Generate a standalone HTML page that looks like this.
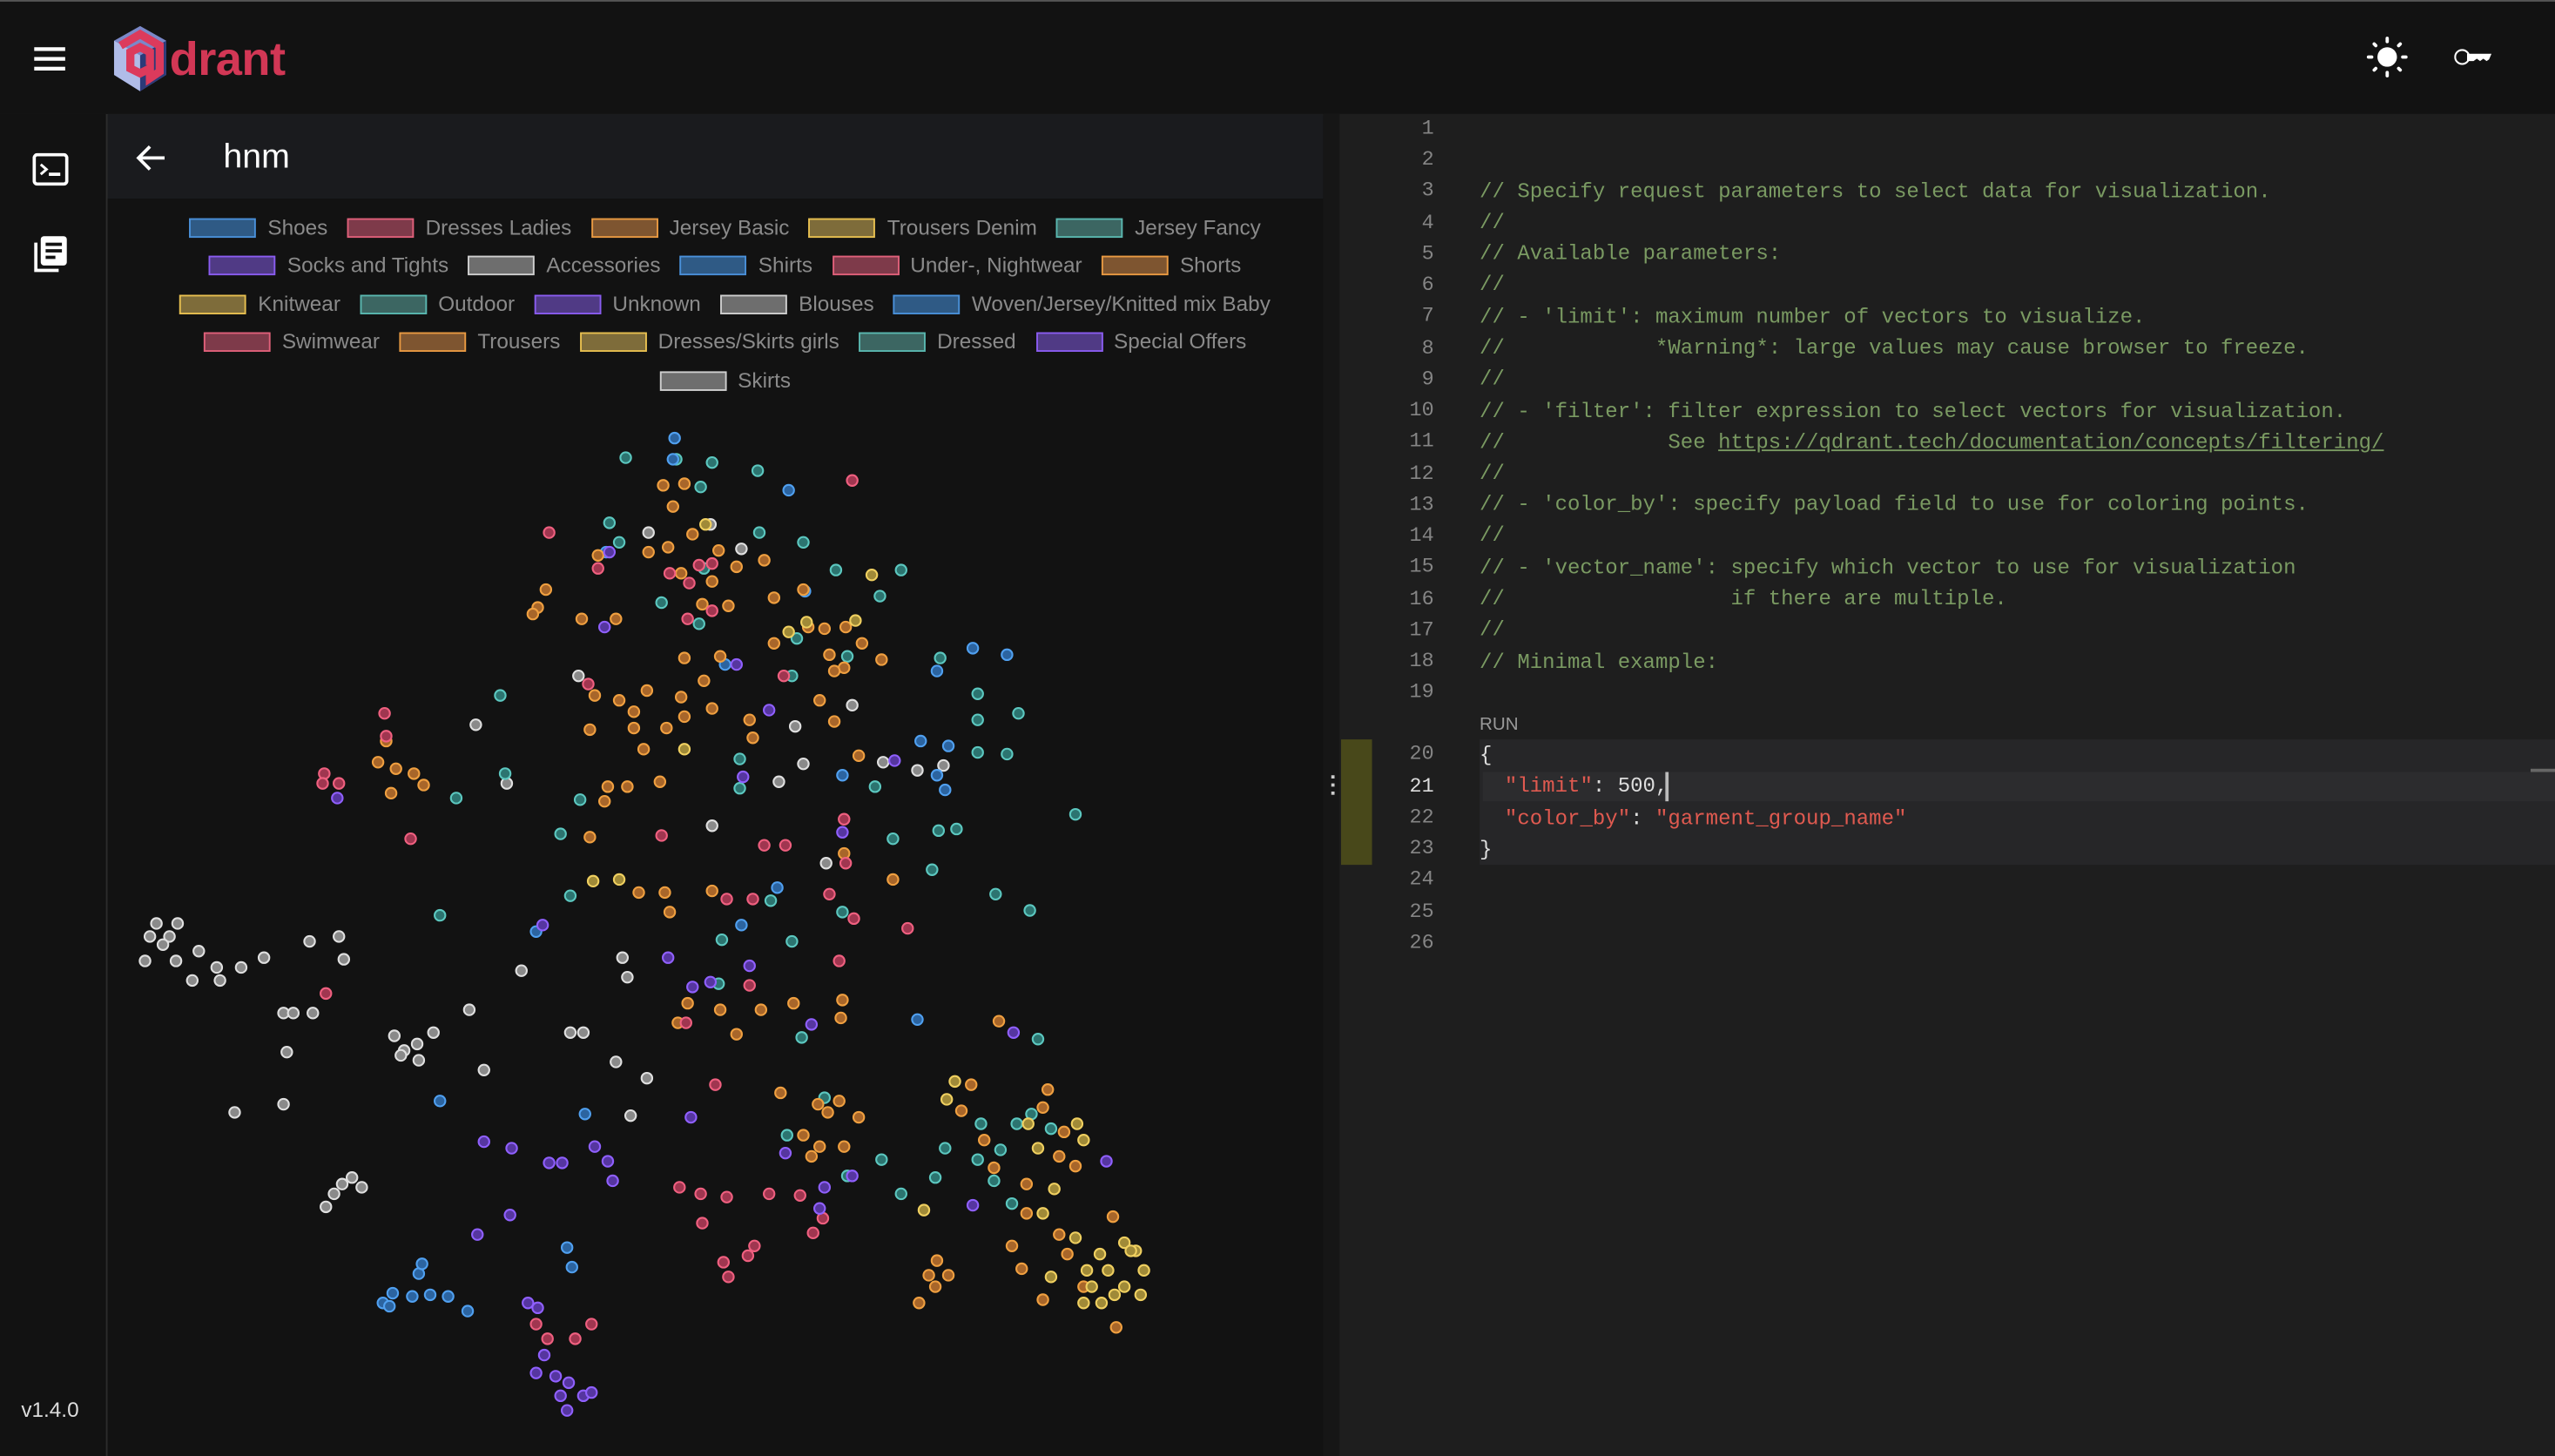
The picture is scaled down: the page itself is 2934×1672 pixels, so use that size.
<!DOCTYPE html>
<html><head><meta charset="utf-8"><style>
html,body{margin:0;padding:0;background:#121212;overflow:hidden;width:2934px;height:1672px}
#w{position:absolute;left:0;top:0;width:1568px;height:894px;transform:scale(1.8712,1.8703);transform-origin:0 0;background:#121212;font-family:"Liberation Sans",sans-serif;overflow:hidden}
.abs{position:absolute}
.top{left:0;top:0;width:1568px;height:69px;background:#121212;border-top:1px solid #555;border-bottom:1px solid #2c2c2c}
.side{left:0;top:70px;width:65px;height:824px;border-right:1px solid #2c2c2c;background:#121212}
.hdr{left:66px;top:70px;width:746px;height:52px;background:#1a1b1e}
.lp{left:66px;top:122px;width:746px;height:772px;background:#121212}
.ed{left:812px;top:70px;width:756px;height:824px;background:#1e1e1e}
.leg{left:66px;width:746px;text-align:center;font-size:13px;color:#8a8a8a;white-space:nowrap;line-height:16px}
.leg span.s{display:inline-block;width:39px;height:10px;border:1.5px solid;vertical-align:-2px;margin:0 7px 0 12px}
.ln{position:absolute;left:840px;width:40px;text-align:right;font-family:"Liberation Mono",monospace;font-size:12.5px;color:#858585;line-height:16px}
.cd{position:absolute;left:908px;font-family:"Liberation Mono",monospace;font-size:12.85px;color:#7a9a62;white-space:pre;line-height:16px}
circle{stroke-width:1.1}
.o circle{fill:#a8662a;stroke:#f0a040}
.t circle{fill:#2c7470;stroke:#5cc8c0}
.r circle{fill:#a03650;stroke:#f06080}
.b circle{fill:#2c64a0;stroke:#50a0f0}
.p circle{fill:#5636a0;stroke:#9060ff}
.g circle{fill:#8a8a8a;stroke:#e0e0e0}
.y circle{fill:#a08a38;stroke:#f0d060}
</style></head><body><div id="w">
<div class="abs top"></div>
<svg class="abs" style="left:20px;top:27px" width="22" height="18"><rect x="1" y="2" width="19" height="2.3" fill="#fff"/><rect x="1" y="8" width="19" height="2.3" fill="#fff"/><rect x="1" y="14" width="19" height="2.3" fill="#fff"/></svg>
<svg class="abs" style="left:68px;top:16px" width="36" height="42" viewBox="0 0 36 42">
<polygon points="18,0 34,9 34,30 18,40 2,30 2,9" fill="#7a88c8"/>
<polygon points="2,9 18,18 18,40 2,30" fill="#b0bce8"/>
<polygon points="18,18 34,9 34,30 18,40" fill="#2c3a78"/>
<path d="M6,12 L18,5 L30,12 L30,28 L24,32 L24,26 L18,29 L12,26 L12,16 L18,13 L24,16 L24,24" fill="none" stroke="#dc3a5c" stroke-width="5"/>
</svg>
<div class="abs" style="left:104px;top:21px;font-size:29px;font-weight:bold;color:#d23755;letter-spacing:-0.3px">drant</div>
<svg class="abs" style="left:1452px;top:22px" width="26" height="26" viewBox="0 0 26 26" fill="#fff"><circle cx="13" cy="13" r="6"/><g stroke="#fff" stroke-width="2" stroke-linecap="round"><line x1="13" y1="1.5" x2="13" y2="3.5"/><line x1="13" y1="22.5" x2="13" y2="24.5"/><line x1="1.5" y1="13" x2="3.5" y2="13"/><line x1="22.5" y1="13" x2="24.5" y2="13"/><line x1="5" y1="5" x2="6" y2="6"/><line x1="20" y1="20" x2="21" y2="21"/><line x1="5" y1="21" x2="6" y2="20"/><line x1="20" y1="6" x2="21" y2="5"/></g></svg>
<svg class="abs" style="left:1505px;top:27px" width="26" height="16" viewBox="0 0 26 16"><circle cx="6" cy="8" r="4.3" fill="none" stroke="#fff" stroke-width="3.4"/><path d="M9,6 L24,6 L22.5,9.5 L21,10.5 L19,9 L17,10.5 L15,9 L13,10.5 L9,10.5Z" fill="#fff"/></svg>
<div class="abs side"></div>
<svg class="abs" style="left:20px;top:94px" width="22" height="20" viewBox="0 0 22 20"><rect x="1" y="1" width="20" height="18" rx="2" fill="none" stroke="#fff" stroke-width="2"/><path d="M5,7 L8.5,10 L5,13" fill="none" stroke="#fff" stroke-width="1.6"/><rect x="10" y="12" width="7" height="2" fill="#fff"/></svg>
<svg class="abs" style="left:20px;top:144px" width="22" height="24" viewBox="0 0 22 24"><path d="M2,5 L2,22 L16,22" fill="none" stroke="#fff" stroke-width="2"/><rect x="5" y="1" width="16" height="18" rx="2" fill="#fff"/><rect x="8" y="5" width="10" height="2" fill="#121212"/><rect x="8" y="9" width="10" height="2" fill="#121212"/><rect x="8" y="13" width="6" height="2" fill="#121212"/></svg>
<div class="abs" style="left:13px;top:858px;font-size:13px;color:#ddd">v1.4.0</div>
<div class="abs hdr"></div>
<svg class="abs" style="left:83px;top:87px" width="20" height="20" viewBox="0 0 20 20"><path d="M18,10 L3,10 M9,3 L2,10 L9,17" fill="none" stroke="#fff" stroke-width="2"/></svg>
<div class="abs" style="left:137px;top:85px;font-size:21px;color:#fff">hnm</div>
<div class="abs lp"></div>
<div class="abs leg" style="top:132px"><span class="s" style="background:#2f5a85;border-color:#4a90d9"></span>Shoes<span class="s" style="background:#7e3a4a;border-color:#e0607a"></span>Dresses Ladies<span class="s" style="background:#7e5530;border-color:#e99a42"></span>Jersey Basic<span class="s" style="background:#7e6c3a;border-color:#e8c050"></span>Trousers Denim<span class="s" style="background:#3c6662;border-color:#5ab8b0"></span>Jersey Fancy</div>
<div class="abs leg" style="top:155px"><span class="s" style="background:#503a85;border-color:#8a5cf0"></span>Socks and Tights<span class="s" style="background:#6e6e6e;border-color:#cfcfcf"></span>Accessories<span class="s" style="background:#2f5a85;border-color:#4a90d9"></span>Shirts<span class="s" style="background:#7e3a4a;border-color:#e0607a"></span>Under-, Nightwear<span class="s" style="background:#7e5530;border-color:#e99a42"></span>Shorts</div>
<div class="abs leg" style="top:179px"><span class="s" style="background:#7e6c3a;border-color:#e8c050"></span>Knitwear<span class="s" style="background:#3c6662;border-color:#5ab8b0"></span>Outdoor<span class="s" style="background:#503a85;border-color:#8a5cf0"></span>Unknown<span class="s" style="background:#6e6e6e;border-color:#cfcfcf"></span>Blouses<span class="s" style="background:#2f5a85;border-color:#4a90d9"></span>Woven/Jersey/Knitted mix Baby</div>
<div class="abs leg" style="top:202px"><span class="s" style="background:#7e3a4a;border-color:#e0607a"></span>Swimwear<span class="s" style="background:#7e5530;border-color:#e99a42"></span>Trousers<span class="s" style="background:#7e6c3a;border-color:#e8c050"></span>Dresses/Skirts girls<span class="s" style="background:#3c6662;border-color:#5ab8b0"></span>Dressed<span class="s" style="background:#503a85;border-color:#8a5cf0"></span>Special Offers</div>
<div class="abs leg" style="top:226px"><span class="s" style="background:#6e6e6e;border-color:#cfcfcf"></span>Skirts</div>
<svg class="abs" style="left:0;top:0" width="812" height="894">
<g class="g"><circle cx="96" cy="567" r="3.3"/><circle cx="92" cy="575" r="3.3"/><circle cx="104" cy="575" r="3.3"/><circle cx="109" cy="567" r="3.3"/><circle cx="100" cy="580" r="3.3"/><circle cx="89" cy="590" r="3.3"/><circle cx="108" cy="590" r="3.3"/><circle cx="122" cy="584" r="3.3"/><circle cx="118" cy="602" r="3.3"/><circle cx="133" cy="594" r="3.3"/><circle cx="135" cy="602" r="3.3"/><circle cx="148" cy="594" r="3.3"/><circle cx="162" cy="588" r="3.3"/><circle cx="190" cy="578" r="3.3"/><circle cx="208" cy="575" r="3.3"/><circle cx="211" cy="589" r="3.3"/><circle cx="174" cy="622" r="3.3"/><circle cx="180" cy="622" r="3.3"/><circle cx="192" cy="622" r="3.3"/><circle cx="176" cy="646" r="3.3"/><circle cx="144" cy="683" r="3.3"/><circle cx="174" cy="678" r="3.3"/><circle cx="242" cy="636" r="3.3"/><circle cx="248" cy="645" r="3.3"/><circle cx="256" cy="641" r="3.3"/><circle cx="266" cy="634" r="3.3"/><circle cx="257" cy="651" r="3.3"/><circle cx="246" cy="648" r="3.3"/><circle cx="288" cy="620" r="3.3"/><circle cx="297" cy="657" r="3.3"/><circle cx="320" cy="596" r="3.3"/><circle cx="350" cy="634" r="3.3"/><circle cx="358" cy="634" r="3.3"/><circle cx="382" cy="588" r="3.3"/><circle cx="385" cy="600" r="3.3"/><circle cx="378" cy="652" r="3.3"/><circle cx="397" cy="662" r="3.3"/><circle cx="387" cy="685" r="3.3"/><circle cx="205" cy="733" r="3.3"/><circle cx="210" cy="727" r="3.3"/><circle cx="216" cy="723" r="3.3"/><circle cx="222" cy="729" r="3.3"/><circle cx="200" cy="741" r="3.3"/><circle cx="292" cy="445" r="3.3"/><circle cx="311" cy="481" r="3.3"/><circle cx="355" cy="415" r="3.3"/><circle cx="437" cy="507" r="3.3"/><circle cx="493" cy="469" r="3.3"/><circle cx="507" cy="530" r="3.3"/><circle cx="563" cy="473" r="3.3"/><circle cx="579" cy="470" r="3.3"/><circle cx="523" cy="433" r="3.3"/><circle cx="542" cy="468" r="3.3"/><circle cx="455" cy="337" r="3.3"/><circle cx="436" cy="322" r="3.3"/><circle cx="478" cy="480" r="3.3"/><circle cx="488" cy="446" r="3.3"/><circle cx="398" cy="327" r="3.3"/></g>
<g class="t"><circle cx="384" cy="281" r="3.3"/><circle cx="415" cy="282" r="3.3"/><circle cx="437" cy="284" r="3.3"/><circle cx="430" cy="299" r="3.3"/><circle cx="465" cy="289" r="3.3"/><circle cx="374" cy="321" r="3.3"/><circle cx="380" cy="333" r="3.3"/><circle cx="307" cy="427" r="3.3"/><circle cx="280" cy="490" r="3.3"/><circle cx="310" cy="475" r="3.3"/><circle cx="344" cy="512" r="3.3"/><circle cx="356" cy="491" r="3.3"/><circle cx="270" cy="562" r="3.3"/><circle cx="350" cy="550" r="3.3"/><circle cx="443" cy="577" r="3.3"/><circle cx="441" cy="604" r="3.3"/><circle cx="486" cy="578" r="3.3"/><circle cx="492" cy="637" r="3.3"/><circle cx="506" cy="674" r="3.3"/><circle cx="483" cy="697" r="3.3"/><circle cx="520" cy="722" r="3.3"/><circle cx="553" cy="733" r="3.3"/><circle cx="574" cy="723" r="3.3"/><circle cx="600" cy="712" r="3.3"/><circle cx="610" cy="725" r="3.3"/><circle cx="580" cy="705" r="3.3"/><circle cx="602" cy="690" r="3.3"/><circle cx="614" cy="706" r="3.3"/><circle cx="624" cy="690" r="3.3"/><circle cx="633" cy="684" r="3.3"/><circle cx="621" cy="739" r="3.3"/><circle cx="645" cy="693" r="3.3"/><circle cx="466" cy="327" r="3.3"/><circle cx="493" cy="333" r="3.3"/><circle cx="513" cy="350" r="3.3"/><circle cx="553" cy="350" r="3.3"/><circle cx="540" cy="366" r="3.3"/><circle cx="486" cy="415" r="3.3"/><circle cx="489" cy="392" r="3.3"/><circle cx="520" cy="403" r="3.3"/><circle cx="577" cy="404" r="3.3"/><circle cx="600" cy="426" r="3.3"/><circle cx="625" cy="438" r="3.3"/><circle cx="618" cy="463" r="3.3"/><circle cx="600" cy="462" r="3.3"/><circle cx="587" cy="509" r="3.3"/><circle cx="576" cy="510" r="3.3"/><circle cx="548" cy="515" r="3.3"/><circle cx="572" cy="534" r="3.3"/><circle cx="611" cy="549" r="3.3"/><circle cx="632" cy="559" r="3.3"/><circle cx="660" cy="500" r="3.3"/><circle cx="454" cy="484" r="3.3"/><circle cx="454" cy="466" r="3.3"/><circle cx="537" cy="483" r="3.3"/><circle cx="473" cy="553" r="3.3"/><circle cx="600" cy="442" r="3.3"/><circle cx="429" cy="383" r="3.3"/><circle cx="406" cy="370" r="3.3"/><circle cx="637" cy="638" r="3.3"/><circle cx="541" cy="712" r="3.3"/><circle cx="432" cy="349" r="3.3"/><circle cx="517" cy="560" r="3.3"/></g>
<g class="b"><circle cx="414" cy="269" r="3.3"/><circle cx="413" cy="282" r="3.3"/><circle cx="484" cy="301" r="3.3"/><circle cx="494" cy="363" r="3.3"/><circle cx="575" cy="412" r="3.3"/><circle cx="597" cy="398" r="3.3"/><circle cx="618" cy="402" r="3.3"/><circle cx="580" cy="485" r="3.3"/><circle cx="575" cy="476" r="3.3"/><circle cx="565" cy="455" r="3.3"/><circle cx="582" cy="458" r="3.3"/><circle cx="517" cy="476" r="3.3"/><circle cx="477" cy="545" r="3.3"/><circle cx="563" cy="626" r="3.3"/><circle cx="359" cy="684" r="3.3"/><circle cx="270" cy="676" r="3.3"/><circle cx="235" cy="800" r="3.3"/><circle cx="241" cy="794" r="3.3"/><circle cx="257" cy="782" r="3.3"/><circle cx="253" cy="796" r="3.3"/><circle cx="264" cy="795" r="3.3"/><circle cx="275" cy="796" r="3.3"/><circle cx="287" cy="805" r="3.3"/><circle cx="348" cy="766" r="3.3"/><circle cx="351" cy="778" r="3.3"/><circle cx="329" cy="572" r="3.3"/><circle cx="455" cy="568" r="3.3"/><circle cx="445" cy="408" r="3.3"/><circle cx="372" cy="339" r="3.3"/><circle cx="259" cy="776" r="3.3"/><circle cx="239" cy="802" r="3.3"/></g>
<g class="o"><circle cx="407" cy="298" r="3.3"/><circle cx="420" cy="297" r="3.3"/><circle cx="413" cy="311" r="3.3"/><circle cx="398" cy="339" r="3.3"/><circle cx="410" cy="336" r="3.3"/><circle cx="425" cy="328" r="3.3"/><circle cx="441" cy="338" r="3.3"/><circle cx="452" cy="348" r="3.3"/><circle cx="367" cy="341" r="3.3"/><circle cx="335" cy="362" r="3.3"/><circle cx="357" cy="380" r="3.3"/><circle cx="378" cy="380" r="3.3"/><circle cx="418" cy="352" r="3.3"/><circle cx="437" cy="357" r="3.3"/><circle cx="431" cy="371" r="3.3"/><circle cx="447" cy="372" r="3.3"/><circle cx="469" cy="344" r="3.3"/><circle cx="493" cy="362" r="3.3"/><circle cx="496" cy="385" r="3.3"/><circle cx="506" cy="386" r="3.3"/><circle cx="519" cy="385" r="3.3"/><circle cx="529" cy="395" r="3.3"/><circle cx="509" cy="402" r="3.3"/><circle cx="518" cy="410" r="3.3"/><circle cx="541" cy="405" r="3.3"/><circle cx="475" cy="367" r="3.3"/><circle cx="365" cy="427" r="3.3"/><circle cx="380" cy="430" r="3.3"/><circle cx="389" cy="437" r="3.3"/><circle cx="397" cy="424" r="3.3"/><circle cx="418" cy="428" r="3.3"/><circle cx="409" cy="447" r="3.3"/><circle cx="420" cy="440" r="3.3"/><circle cx="432" cy="418" r="3.3"/><circle cx="460" cy="442" r="3.3"/><circle cx="462" cy="453" r="3.3"/><circle cx="512" cy="412" r="3.3"/><circle cx="503" cy="430" r="3.3"/><circle cx="512" cy="443" r="3.3"/><circle cx="527" cy="464" r="3.3"/><circle cx="389" cy="447" r="3.3"/><circle cx="362" cy="448" r="3.3"/><circle cx="395" cy="460" r="3.3"/><circle cx="385" cy="483" r="3.3"/><circle cx="373" cy="483" r="3.3"/><circle cx="371" cy="492" r="3.3"/><circle cx="405" cy="480" r="3.3"/><circle cx="362" cy="514" r="3.3"/><circle cx="392" cy="548" r="3.3"/><circle cx="408" cy="548" r="3.3"/><circle cx="411" cy="560" r="3.3"/><circle cx="437" cy="547" r="3.3"/><circle cx="518" cy="524" r="3.3"/><circle cx="548" cy="540" r="3.3"/><circle cx="260" cy="482" r="3.3"/><circle cx="254" cy="475" r="3.3"/><circle cx="240" cy="487" r="3.3"/><circle cx="243" cy="472" r="3.3"/><circle cx="232" cy="468" r="3.3"/><circle cx="237" cy="455" r="3.3"/><circle cx="330" cy="373" r="3.3"/><circle cx="327" cy="377" r="3.3"/><circle cx="442" cy="403" r="3.3"/><circle cx="475" cy="395" r="3.3"/><circle cx="422" cy="616" r="3.3"/><circle cx="416" cy="628" r="3.3"/><circle cx="442" cy="620" r="3.3"/><circle cx="452" cy="635" r="3.3"/><circle cx="467" cy="620" r="3.3"/><circle cx="517" cy="614" r="3.3"/><circle cx="516" cy="625" r="3.3"/><circle cx="487" cy="616" r="3.3"/><circle cx="479" cy="671" r="3.3"/><circle cx="502" cy="678" r="3.3"/><circle cx="508" cy="683" r="3.3"/><circle cx="515" cy="676" r="3.3"/><circle cx="527" cy="686" r="3.3"/><circle cx="493" cy="697" r="3.3"/><circle cx="503" cy="704" r="3.3"/><circle cx="518" cy="704" r="3.3"/><circle cx="498" cy="710" r="3.3"/><circle cx="613" cy="627" r="3.3"/><circle cx="596" cy="666" r="3.3"/><circle cx="604" cy="700" r="3.3"/><circle cx="590" cy="682" r="3.3"/><circle cx="610" cy="717" r="3.3"/><circle cx="630" cy="727" r="3.3"/><circle cx="650" cy="710" r="3.3"/><circle cx="660" cy="716" r="3.3"/><circle cx="653" cy="695" r="3.3"/><circle cx="640" cy="680" r="3.3"/><circle cx="643" cy="669" r="3.3"/><circle cx="575" cy="774" r="3.3"/><circle cx="570" cy="783" r="3.3"/><circle cx="582" cy="783" r="3.3"/><circle cx="574" cy="790" r="3.3"/><circle cx="564" cy="800" r="3.3"/><circle cx="621" cy="765" r="3.3"/><circle cx="627" cy="779" r="3.3"/><circle cx="630" cy="745" r="3.3"/><circle cx="650" cy="758" r="3.3"/><circle cx="655" cy="770" r="3.3"/><circle cx="665" cy="790" r="3.3"/><circle cx="683" cy="747" r="3.3"/><circle cx="685" cy="815" r="3.3"/><circle cx="640" cy="798" r="3.3"/><circle cx="437" cy="435" r="3.3"/><circle cx="420" cy="404" r="3.3"/></g>
<g class="y"><circle cx="433" cy="322" r="3.3"/><circle cx="535" cy="353" r="3.3"/><circle cx="495" cy="382" r="3.3"/><circle cx="525" cy="381" r="3.3"/><circle cx="484" cy="388" r="3.3"/><circle cx="586" cy="664" r="3.3"/><circle cx="581" cy="675" r="3.3"/><circle cx="631" cy="690" r="3.3"/><circle cx="661" cy="690" r="3.3"/><circle cx="665" cy="700" r="3.3"/><circle cx="637" cy="705" r="3.3"/><circle cx="647" cy="730" r="3.3"/><circle cx="640" cy="745" r="3.3"/><circle cx="660" cy="760" r="3.3"/><circle cx="675" cy="770" r="3.3"/><circle cx="690" cy="763" r="3.3"/><circle cx="697" cy="768" r="3.3"/><circle cx="702" cy="780" r="3.3"/><circle cx="680" cy="780" r="3.3"/><circle cx="670" cy="790" r="3.3"/><circle cx="690" cy="790" r="3.3"/><circle cx="700" cy="795" r="3.3"/><circle cx="694" cy="768" r="3.3"/><circle cx="676" cy="800" r="3.3"/><circle cx="665" cy="800" r="3.3"/><circle cx="684" cy="795" r="3.3"/><circle cx="667" cy="780" r="3.3"/><circle cx="645" cy="784" r="3.3"/><circle cx="567" cy="743" r="3.3"/><circle cx="380" cy="540" r="3.3"/><circle cx="364" cy="541" r="3.3"/><circle cx="420" cy="460" r="3.3"/></g>
<g class="r"><circle cx="523" cy="295" r="3.3"/><circle cx="337" cy="327" r="3.3"/><circle cx="411" cy="352" r="3.3"/><circle cx="423" cy="358" r="3.3"/><circle cx="429" cy="347" r="3.3"/><circle cx="437" cy="346" r="3.3"/><circle cx="367" cy="349" r="3.3"/><circle cx="422" cy="380" r="3.3"/><circle cx="437" cy="375" r="3.3"/><circle cx="236" cy="438" r="3.3"/><circle cx="237" cy="452" r="3.3"/><circle cx="199" cy="475" r="3.3"/><circle cx="208" cy="481" r="3.3"/><circle cx="198" cy="481" r="3.3"/><circle cx="252" cy="515" r="3.3"/><circle cx="406" cy="513" r="3.3"/><circle cx="469" cy="519" r="3.3"/><circle cx="482" cy="519" r="3.3"/><circle cx="518" cy="503" r="3.3"/><circle cx="519" cy="530" r="3.3"/><circle cx="509" cy="549" r="3.3"/><circle cx="524" cy="564" r="3.3"/><circle cx="446" cy="552" r="3.3"/><circle cx="462" cy="552" r="3.3"/><circle cx="557" cy="570" r="3.3"/><circle cx="515" cy="590" r="3.3"/><circle cx="460" cy="605" r="3.3"/><circle cx="200" cy="610" r="3.3"/><circle cx="421" cy="628" r="3.3"/><circle cx="439" cy="666" r="3.3"/><circle cx="417" cy="729" r="3.3"/><circle cx="430" cy="733" r="3.3"/><circle cx="446" cy="735" r="3.3"/><circle cx="431" cy="751" r="3.3"/><circle cx="472" cy="733" r="3.3"/><circle cx="491" cy="734" r="3.3"/><circle cx="505" cy="748" r="3.3"/><circle cx="499" cy="757" r="3.3"/><circle cx="463" cy="765" r="3.3"/><circle cx="459" cy="771" r="3.3"/><circle cx="444" cy="775" r="3.3"/><circle cx="447" cy="784" r="3.3"/><circle cx="363" cy="813" r="3.3"/><circle cx="329" cy="813" r="3.3"/><circle cx="336" cy="822" r="3.3"/><circle cx="353" cy="822" r="3.3"/><circle cx="481" cy="415" r="3.3"/><circle cx="361" cy="420" r="3.3"/></g>
<g class="p"><circle cx="371" cy="385" r="3.3"/><circle cx="374" cy="339" r="3.3"/><circle cx="452" cy="408" r="3.3"/><circle cx="456" cy="477" r="3.3"/><circle cx="472" cy="436" r="3.3"/><circle cx="549" cy="467" r="3.3"/><circle cx="333" cy="568" r="3.3"/><circle cx="410" cy="588" r="3.3"/><circle cx="425" cy="606" r="3.3"/><circle cx="460" cy="593" r="3.3"/><circle cx="498" cy="629" r="3.3"/><circle cx="622" cy="634" r="3.3"/><circle cx="424" cy="686" r="3.3"/><circle cx="297" cy="701" r="3.3"/><circle cx="314" cy="705" r="3.3"/><circle cx="337" cy="714" r="3.3"/><circle cx="345" cy="714" r="3.3"/><circle cx="365" cy="704" r="3.3"/><circle cx="373" cy="713" r="3.3"/><circle cx="376" cy="725" r="3.3"/><circle cx="313" cy="746" r="3.3"/><circle cx="293" cy="758" r="3.3"/><circle cx="506" cy="729" r="3.3"/><circle cx="523" cy="722" r="3.3"/><circle cx="597" cy="740" r="3.3"/><circle cx="679" cy="713" r="3.3"/><circle cx="482" cy="708" r="3.3"/><circle cx="503" cy="742" r="3.3"/><circle cx="330" cy="803" r="3.3"/><circle cx="324" cy="800" r="3.3"/><circle cx="329" cy="843" r="3.3"/><circle cx="341" cy="845" r="3.3"/><circle cx="349" cy="849" r="3.3"/><circle cx="358" cy="857" r="3.3"/><circle cx="363" cy="855" r="3.3"/><circle cx="344" cy="857" r="3.3"/><circle cx="348" cy="866" r="3.3"/><circle cx="334" cy="832" r="3.3"/><circle cx="436" cy="603" r="3.3"/><circle cx="517" cy="511" r="3.3"/><circle cx="207" cy="490" r="3.3"/></g>
</svg>
<div class="abs ed"></div>
<div class="abs" style="left:812px;top:70px;width:10px;height:824px;background:#161616"></div>
<div class="abs" style="left:817px;top:476px;width:2px;height:2px;background:#ccc"></div>
<div class="abs" style="left:817px;top:481px;width:2px;height:2px;background:#ccc"></div>
<div class="abs" style="left:817px;top:486px;width:2px;height:2px;background:#ccc"></div>
<div class="abs" style="left:823px;top:454px;width:19px;height:77px;background:#48481a"></div>
<div class="abs" style="left:908px;top:454px;width:660px;height:77px;background:#262628"></div>
<div class="abs" style="left:910px;top:474px;width:658px;height:18px;background:#2c2c2e"></div>
<div class="abs" style="left:1022px;top:474px;width:1.5px;height:18px;background:#bbb"></div>
<div class="abs" style="left:1553px;top:472px;width:15px;height:2px;background:#666"></div>
<div class="ln" style="top:71px">1</div><div class="ln" style="top:90px">2</div><div class="ln" style="top:109px">3</div><div class="ln" style="top:129px">4</div><div class="ln" style="top:148px">5</div><div class="ln" style="top:167px">6</div><div class="ln" style="top:186px">7</div><div class="ln" style="top:206px">8</div><div class="ln" style="top:225px">9</div><div class="ln" style="top:244px">10</div><div class="ln" style="top:263px">11</div><div class="ln" style="top:283px">12</div><div class="ln" style="top:302px">13</div><div class="ln" style="top:321px">14</div><div class="ln" style="top:340px">15</div><div class="ln" style="top:360px">16</div><div class="ln" style="top:379px">17</div><div class="ln" style="top:398px">18</div><div class="ln" style="top:417px">19</div>
<div class="ln" style="top:455px">20</div><div class="ln" style="top:475px;color:#ddd">21</div><div class="ln" style="top:494px">22</div><div class="ln" style="top:513px">23</div><div class="ln" style="top:532px">24</div><div class="ln" style="top:552px">25</div><div class="ln" style="top:571px">26</div>
<div class="cd" style="top:110px">// Specify request parameters to select data for visualization.</div>
<div class="cd" style="top:129px">//</div>
<div class="cd" style="top:148px">// Available parameters:</div>
<div class="cd" style="top:167px">//</div>
<div class="cd" style="top:187px">// - 'limit': maximum number of vectors to visualize.</div>
<div class="cd" style="top:206px">//            *Warning*: large values may cause browser to freeze.</div>
<div class="cd" style="top:225px">//</div>
<div class="cd" style="top:245px">// - 'filter': filter expression to select vectors for visualization.</div>
<div class="cd" style="top:264px">//             See <span style="text-decoration:underline">https://qdrant.tech/documentation/concepts/filtering/</span></div>
<div class="cd" style="top:283px">//</div>
<div class="cd" style="top:302px">// - 'color_by': specify payload field to use for coloring points.</div>
<div class="cd" style="top:321px">//</div>
<div class="cd" style="top:341px">// - 'vector_name': specify which vector to use for visualization</div>
<div class="cd" style="top:360px">//                  if there are multiple.</div>
<div class="cd" style="top:379px">//</div>
<div class="cd" style="top:399px">// Minimal example:</div>
<div class="cd" style="top:437px;font-family:'Liberation Sans',sans-serif;font-size:11px;color:#999">RUN</div>
<div class="cd" style="top:456px;color:#ddd">{</div>
<div class="cd" style="top:475px;color:#ddd">  <span style="color:#e05a50">"limit"</span>: 500,</div>
<div class="cd" style="top:495px;color:#ddd">  <span style="color:#e05a50">"color_by"</span>: <span style="color:#e05a50">"garment_group_name"</span></div>
<div class="cd" style="top:514px;color:#ddd">}</div>
</div></body></html>
